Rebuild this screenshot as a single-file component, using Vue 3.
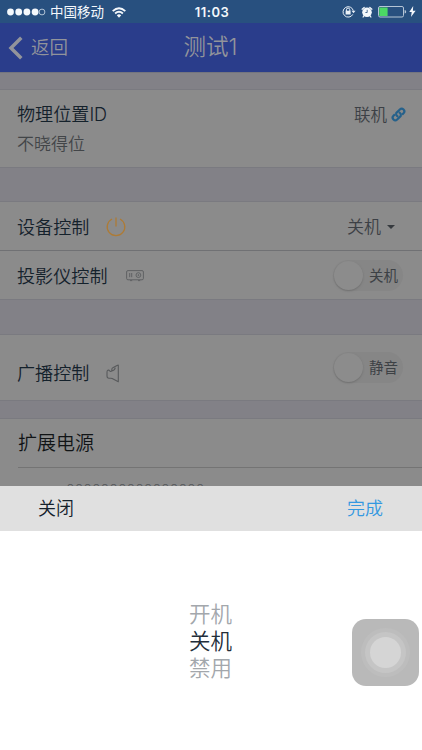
<script setup>
const choices = ['开机', '关机', '禁用']
const selected = '关机'
</script>

<template>
  <main class="screen">
    <div class="status">
      <svg class="signal" viewBox="0 0 40 10">
        <circle v-for="n in 4" :key="n" :cx="n * 8.2 - 4.7" cy="5" r="3.4" fill="#f4f8fc" />
        <circle cx="35" cy="5" r="2.9" fill="none" stroke="#d3deea" stroke-width=".8" />
      </svg>
      <span class="carrier">中国移动</span>
      <svg class="wifi" viewBox="0 0 14 11" fill="none" stroke="#f4f8fc" stroke-width="1.9">
        <path d="M.7 4.1Q7 -1.7 13.3 4.1M3.1 6.5Q7 3 10.9 6.5" />
        <path d="M4.8 8.2Q7 6.4 9.2 8.2L7 10.7Z" fill="#f4f8fc" stroke="none" />
      </svg>
      <time>11:03</time>
      <div class="status-icons">
        <svg class="lock" viewBox="0 0 14 13" fill="none" stroke="#e9f0f7">
          <path d="M10.8 9.4A5.2 5.2 0 1 1 11.3 5.7" />
          <path d="M9.5 5.7h4l-2 2.5z" fill="#e9f0f7" stroke="none" />
          <path d="M4.4 6V4.8a1.7 1.7 0 0 1 3.4 0V6" />
          <path d="M3.6 5.7h5v3.8h-5z" fill="#e9f0f7" stroke="none" />
        </svg>
        <svg class="alarm" viewBox="0 0 12 12">
          <circle cx="6" cy="6.3" r="4.8" fill="#f4f8fc" />
          <path d="M1.1 3.2 3.2 1.4M10.9 3.2 8.8 1.4M2.8 10 2.1 11M9.2 10l.7 1" stroke="#f4f8fc" stroke-width="1.3" stroke-linecap="round" />
          <path d="M6.2 3.8v2.7H4.4" fill="none" stroke="#28507f" stroke-width=".8" />
        </svg>
        <svg class="battery" viewBox="0 0 29 12">
          <rect x=".5" y=".5" width="25" height="10.5" rx="1.5" fill="none" stroke="#b5c5d6" />
          <rect x="1.3" y="1.5" width="8.3" height="8.5" fill="#4bd864" />
          <path d="M26.6 4q1.6 0 1.6 1.8t-1.6 1.8z" fill="#b5c5d6" />
        </svg>
        <svg class="bolt" viewBox="0 0 7 11"><path d="M4.2 0 .3 6h2.4L2 11l4.6-6.2H3.9z" fill="#f4f8fc" /></svg>
      </div>
    </div>

    <header class="nav">
      <div class="back">
        <svg viewBox="0 0 15 24"><path d="M12.8 1.8 2.5 12l10.3 10.2" fill="none" stroke="#92949b" stroke-width="3.5" /></svg>
        <span>返回</span>
      </div>
      <h1>测试1</h1>
    </header>

    <section class="card location">
      <div class="line">
        <span class="label">物理位置ID</span>
        <span class="value">联机</span>
        <svg class="link" viewBox="0 0 16 16" fill="none" stroke="#25618b" stroke-width="2.3">
          <g transform="rotate(-45 8 8)">
            <path d="M6.2 9.6a3 3 0 0 1 1.3-4.4h5.3a2.8 2.8 0 0 1 0 5.6h-2.2" />
            <path d="M9.8 6.4a3 3 0 0 1-1.3 4.4H3.2a2.8 2.8 0 0 1 0-5.6h2.2" />
          </g>
        </svg>
      </div>
      <p>不晓得位</p>
    </section>

    <section class="card controls">
      <div class="row device">
        <span class="label">设备控制</span>
        <svg class="power" viewBox="0 0 20 20" fill="none" stroke="#ae7b35" stroke-width="1.3">
          <path d="M6 2a8.8 8.8 0 1 0 8 0M10 .5v9" />
        </svg>
        <span class="value">关机</span>
        <i class="caret"></i>
      </div>
      <div class="row projector-row">
        <span class="label">投影仪控制</span>
        <svg class="projector" viewBox="0 0 18 12" fill="none" stroke="#606264">
          <rect x=".6" y=".6" width="16.8" height="9.2" rx="1.4" />
          <path d="M3.7 3v4.2M5.7 3v4.2M4 10.6h2.2M12 10.6h2.2" />
          <circle cx="12.4" cy="5.1" r="2.4" /><circle cx="12.4" cy="5.1" r=".5" />
        </svg>
        <div class="switch"><i></i><span>关机</span></div>
      </div>
    </section>

    <section class="card broadcast">
      <span class="label">广播控制</span>
      <svg class="speaker" viewBox="0 0 14 19" fill="none" stroke="#585a5c" stroke-width="1.1" stroke-linejoin="round">
        <path d="M12.3 1.2v16.6L6.2 14.6Q5.4 14.2 4.5 14.2H3Q1 14.2 1 12V8.3Q1 5.8 2.7 6l1.5 1.3q.9.5 1.5-.3l.2-2q.1-.9.9-1.3l4.7-2.5q.8-.5.8 0M5.7 7Q8.8 6.3 9.3 3.6" />
      </svg>
      <div class="switch"><i></i><span>静音</span></div>
    </section>

    <section class="card extension">
      <h2>扩展电源</h2>
      <div class="serial">0000000000000000</div>
    </section>

    <section class="picker">
      <div class="toolbar"><span>关闭</span><span class="done">完成</span></div>
      <ul>
        <li v-for="choice in choices" :key="choice" :class="{ selected: choice === selected }">{{ choice }}</li>
      </ul>
    </section>

    <div class="assistive"><i></i></div>
  </main>
</template>

<style>
body { margin: 0; }
</style>

<style scoped>
* { box-sizing: border-box; }
svg { display: block; flex: none; overflow: visible; }
.screen {
  position: relative;
  display: flex;
  flex-direction: column;
  width: 422px;
  height: 750px;
  overflow: hidden;
  background: #828187;
  color: #14212b;
  font-family: Inter, "Noto Sans CJK SC", sans-serif;
  font-size: 18px;
  font-weight: 350;
}
.status {
  flex: none;
  display: grid;
  grid-template-columns: 43px 61px 1fr;
  align-items: center;
  position: relative;
  height: 23px;
  padding-left: 7px;
  background: #28507f;
  color: #f4f8fc;
  font-weight: 400;
}
.signal { width: 40px; height: 10px; }
.carrier { font-size: 13.5px; line-height: 23px; padding-top: 1px; white-space: nowrap; }
.wifi { width: 14px; height: 11px; margin-left: 1px; }
.status time { position: absolute; left: 0; right: 0; text-align: center; font-size: 13px; font-weight: 600; line-height: 24px; letter-spacing: .5px; padding-left: 2px; }
.status-icons { position: absolute; right: 6px; top: 0; height: 23px; display: flex; align-items: center; }
.lock { width: 14px; height: 13px; margin-right: 5px; }
.alarm { width: 12px; height: 12px; margin-right: 5px; }
.battery { width: 29px; height: 12px; margin-right: 2px; }
.bolt { width: 7px; height: 11px; }
.nav {
  flex: none;
  position: relative;
  height: 50px;
  background: #2a3d8b;
  border-bottom: 1px solid #74757f;
  color: #92949b;
}
.back { display: flex; align-items: center; height: 49px; padding-left: 8px; gap: 7px; font-size: 18.5px; line-height: 26px; }
.back svg { width: 16px; height: 24px; }
.back span { padding-bottom: 2px; }
.nav h1 { position: absolute; inset: 0; margin: 0; text-align: center; font-size: 22.5px; line-height: 47px; font-weight: 350; padding-right: 1px; }
.card { flex: none; background: #8b8b8b; border-top: 1px solid #7a7a80; border-bottom: 1px solid #7a7a80; }
.label { line-height: 26px; white-space: nowrap; font-size: 18.1px; }
.value { margin-left: auto; font-size: 16.5px; color: #3c4045; line-height: 26px; }
.location { height: 79px; margin-top: 16px; padding: 11px 16px 0 17px; }
.line { display: flex; align-items: center; height: 27px; }
.line .label { padding-bottom: 2px; }
.link { width: 15px; height: 15px; margin-left: 4px; }
.location p { margin: 3px 0 0; font-size: 17px; line-height: 26px; color: #424548; }
.controls { height: 99px; margin-top: 33px; }
.row { display: flex; align-items: center; padding: 0 19px 0 17px; }
.row .label { padding-top: 1px; }
.device { height: 49px; border-bottom: 1px solid #707174; }
.device .value { font-size: 17px; padding-top: 2px; }
.power { width: 20px; height: 20px; margin-left: 17px; margin-top: 1px; }
.caret { border: 4px solid transparent; border-top: 4px solid #363a3e; border-bottom: 0; margin: 2px 8px 0 6px; }
.projector-row { height: 48px; }
.projector { width: 18px; height: 12px; margin-left: 19px; margin-top: 2px; }
.switch { position: relative; width: 70px; height: 31px; margin-left: auto; border-radius: 16px; background: #868686; display: flex; align-items: center; justify-content: flex-end; padding-right: 5px; font-size: 14.5px; line-height: 22px; font-weight: 400; color: #3d4145; }
.projector-row .switch { margin-top: 1px; }
.switch i { position: absolute; left: 1px; top: 1px; width: 29px; height: 29px; border-radius: 50%; background: #8c8c8c; box-shadow: 0 1px 2px #707070; }
.broadcast { display: flex; height: 67px; margin-top: 34px; padding: 18px 19px 0 17px; align-items: flex-start; }
.broadcast .label { margin-top: 7px; }
.speaker { width: 14px; height: 19px; margin: 11px 0 0 17px; }
.broadcast .switch { margin-top: -1px; }
.extension { height: 68px; margin-top: 17px; padding-left: 18px; overflow: hidden; border-bottom: 0; }
.extension h2 { margin: 0; font-size: 19px; font-weight: 350; line-height: 50px; height: 49px; color: #111416; border-bottom: 1px solid #747474; }
.serial { padding: 12px 0 0 48px; font-size: 14px; line-height: 20px; color: #55585b; }
.picker { flex: 1; background: #fff; }
.toolbar { display: flex; justify-content: space-between; height: 45px; padding: 0 39px 0 38px; background: #e0e0e0; line-height: 46px; }
.done { color: #3498e0; }
.picker ul { list-style: none; margin: 70px 0 0; padding: 0 1px 0 0; text-align: center; font-size: 21.5px; line-height: 27px; color: #a3a7ac; }
.picker .selected { color: #232e3a; }
.assistive { position: absolute; left: 352px; top: 619px; width: 67px; height: 67px; border-radius: 14px; background: #b9b9b9; display: grid; place-items: center; }
.assistive i { width: 31px; height: 31px; border-radius: 50%; background: #d5d5d5; box-shadow: 0 0 0 5px #c5c5c5, 0 0 0 9px #bdbdbd; }
</style>
